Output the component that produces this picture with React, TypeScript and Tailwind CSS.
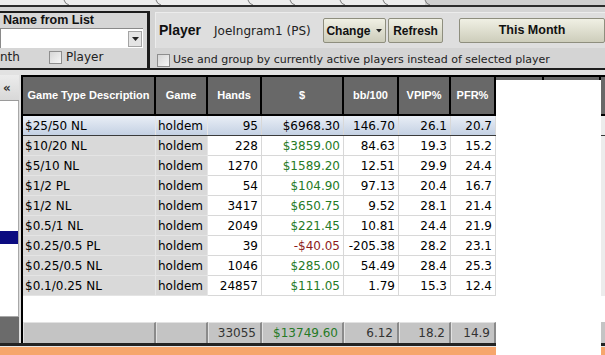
import React from 'react';

const cols = [
  { w: 'w-[133px]', gray: true, left: true },
  { w: 'w-[52px]', gray: true, left: true },
  { w: 'w-[54px]', gray: false, left: false },
  { w: 'w-[82px]', gray: false, left: false },
  { w: 'w-[55px]', gray: false, left: false },
  { w: 'w-[52px]', gray: false, left: false },
  { w: 'w-[45px]', gray: false, left: false },
];

const headers = ['Game Type Description', 'Game', 'Hands', '$', 'bb/100', 'VPIP%', 'PFR%'];

const rows = [
  ['$25/50 NL', 'holdem', '95', '$6968.30', '146.70', '26.1', '20.7'],
  ['$10/20 NL', 'holdem', '228', '$3859.00', '84.63', '19.3', '15.2'],
  ['$5/10 NL', 'holdem', '1270', '$1589.20', '12.51', '29.9', '24.4'],
  ['$1/2 PL', 'holdem', '54', '$104.90', '97.13', '20.4', '16.7'],
  ['$1/2 NL', 'holdem', '3417', '$650.75', '9.52', '28.1', '21.4'],
  ['$0.5/1 NL', 'holdem', '2049', '$221.45', '10.81', '24.4', '21.9'],
  ['$0.25/0.5 PL', 'holdem', '39', '-$40.05', '-205.38', '28.2', '23.1'],
  ['$0.25/0.5 NL', 'holdem', '1046', '$285.00', '54.49', '28.4', '25.3'],
  ['$0.1/0.25 NL', 'holdem', '24857', '$111.05', '1.79', '15.3', '12.4'],
];

const footer = ['', '', '33055', '$13749.60', '6.12', '18.2', '14.9'];

// only the $ column is coloured
function moneyColor(v: string, ci: number) {
  if (ci !== 3) return '';
  if (v.startsWith('-$')) return 'text-[#8c1c1c]';
  if (v.startsWith('$')) return 'text-[#267a26]';
  return '';
}

function Checkbox() {
  return <div className="w-[13px] h-[13px] shrink-0 border border-[#8e8e8e] bg-gradient-to-br from-[#d6d6d6] to-[#f6f6f6]" />;
}

function TabStrip() {
  return (
    <div className="h-[5px] flex">
      <div className="w-[425px] bg-[#ededed]" />
      <div className="flex-1 bg-[#cfcfcf]" />
      <svg className="absolute left-0 top-0" width="605" height="5">
        {[64, 156, 248, 290, 340, 383, 425].map((x) => (
          <path key={x} d={`M${x} 0 Q${x + 1} 4 ${x + 5} 5`} stroke="#7a7a7a" strokeWidth="1" fill="none" />
        ))}
      </svg>
    </div>
  );
}

export default function App() {
  return (
    <div className="relative w-[605px] h-[355px] overflow-hidden bg-[#d4d4d4] font-['DejaVu_Sans',sans-serif] text-[12px] text-black">
      <TabStrip />
      <div className="h-[2px] bg-[#2c2c2c]" />

      {/* toolbar */}
      <div className="flex h-[61px]">
        <div className="mt-[4px] w-[150px] h-[57px] border-t-2 border-r-[3px] border-[#1c1c1c] bg-[#d6d6d6]">
          <div className="h-[15px] pl-[3px] leading-[15px] font-bold font-['Liberation_Sans',sans-serif] text-[12.5px] text-[#111]">
            Name from List
          </div>
          <div className="flex items-center justify-end w-[143px] h-[20px] bg-white border-t border-l border-[#8a8a8a] pr-[1px]">
            <div className="w-[14px] h-[16px] flex items-center justify-center bg-[#e4e4e4] border border-[#a4a4a4]">
              <svg width="7" height="4" viewBox="0 0 7 4">
                <path d="M0 0 L7 0 L3.5 4 Z" fill="#222" />
              </svg>
            </div>
          </div>
          <div className="mt-[2px] flex items-center h-[14px] text-[#222]">
            <span className="w-[49px]">nth</span>
            <Checkbox />
            <span className="ml-[4px]">Player</span>
          </div>
        </div>

        <div className="flex-1 ml-[5px] min-w-0">
          <div className="mt-[5px] h-[36px] flex items-center bg-[#dedede] border-t border-l border-[#ececec] pl-[3px] whitespace-nowrap">
            <span className="font-bold font-['Liberation_Sans',sans-serif] text-[14px] text-[#111]">Player</span>
            <span className="ml-[13px] text-[#222]">JoeIngram1 (PS)</span>
            <button className="ml-[12px] w-[67px] h-[25px] flex items-center justify-center gap-[6px] border border-[#8e8e7e] rounded-[2px] bg-gradient-to-b from-[#f0f0e4] to-[#cdcdbb] font-bold font-['Liberation_Sans',sans-serif] text-[12px] text-[#111]">
              Change
              <svg width="6" height="4" viewBox="0 0 6 4">
                <path d="M0 0 L6 0 L3 3.5 Z" fill="#222" />
              </svg>
            </button>
            <button className="ml-[2px] w-[58px] h-[25px] border border-[#8e8e7e] rounded-[2px] bg-gradient-to-b from-[#f0f0e4] to-[#cdcdbb] font-bold font-['Liberation_Sans',sans-serif] text-[12px] text-[#111]">
              Refresh
            </button>
            <button className="ml-[16px] w-[146px] shrink-0 h-[25px] border border-[#8e8e7e] rounded-[2px] bg-gradient-to-b from-[#f0f0e4] to-[#cdcdbb] font-bold font-['Liberation_Sans',sans-serif] text-[12.5px] text-[#111]">
              This Month
            </button>
          </div>
          <div className="mt-[4px] flex items-center pl-[2px] whitespace-nowrap text-[11px] text-[#222]">
            <Checkbox />
            <span className="ml-[3px]">Use and group by currently active players instead of selected player</span>
          </div>
        </div>
      </div>

      <div className="h-[2px] bg-[#1e1e1e]" />
      <div className="h-[5px] bg-[#e2e2e2]" />

      {/* main */}
      <div className="flex h-[268px]">
        <div className="w-[19px] flex flex-col">
          <div className="h-[26px] flex items-center pl-[3px] bg-gradient-to-b from-[#ececec] to-[#d8d8d8] border-b border-[#9a9a9a] font-bold text-[#333]">
            «
          </div>
          <div className="flex-1 bg-white border-r border-b border-[#a8a8a8] pt-[130px]">
            <div className="h-[13px] bg-[#0b0b80]" />
          </div>
          <div className="h-[26px] bg-[#6b6b6b]" />
        </div>
        <div className="w-[2px] bg-[#dedede]" />
        <div className="w-[2px] bg-black" />

        <div className="flex-1 flex flex-col min-w-0">
          {/* header */}
          <div className="flex h-[41px] border-t-2 border-b-2 border-black bg-[#686868] font-bold font-['Liberation_Sans',sans-serif] text-[11px] text-white">
            {headers.map((h, i) => (
              <div key={h} className={`${cols[i].w} shrink-0 flex items-center justify-center border-r-2 border-black`}>
                {h}
              </div>
            ))}
            <div className="w-[48px] shrink-0 border-r-2 border-black" />
            <div className="w-[57px] shrink-0 border-r-2 border-black" />
            <div className="flex-1" />
          </div>

          {/* rows */}
          {rows.map((r, ri) => {
            const sel = ri === 0;
            return (
              <div
                key={ri}
                className={`flex h-[20px] ${sel ? 'bg-gradient-to-b from-[#e9eef6] to-[#c4d1e3] border-b border-[#3a3a3a]' : ''}`}
              >
                {r.map((v, ci) => {
                  const c = cols[ci];
                  const bg = sel ? '' : c.gray ? 'bg-[#d9d9d9] border-b border-[#e4e4e4]' : 'bg-white border-b border-[#d8d8d8]';
                  const color = sel ? '' : moneyColor(v, ci);
                  return (
                    <div
                      key={ci}
                      className={`${c.w} shrink-0 flex items-center whitespace-nowrap overflow-hidden border-r ${c.gray ? 'border-r-[#e6e6e6]' : 'border-r-[#d8d8d8]'} ${bg} ${color} ${c.left ? 'pl-[2px]' : 'justify-end pr-[3px]'}`}
                    >
                      {v}
                    </div>
                  );
                })}
                <div className="flex-1 bg-[#ececec]" />
              </div>
            );
          })}

          <div className="h-[26px] bg-white" />

          {/* footer */}
          <div className="flex h-[21px] bg-[#c4c4c4] text-[#333]">
            {footer.map((v, ci) => (
              <div
                key={ci}
                className={`${cols[ci].w} shrink-0 flex items-center justify-end pr-[4px] border-t border-l border-[#e2e2e2] border-r-2 border-r-[#8a8a8a] ${moneyColor(v, ci)}`}
              >
                {v}
              </div>
            ))}
            <div className="flex-1" />
          </div>
        </div>
      </div>

      <div className="h-[3px] bg-[#232323]" />
      <div className="h-[1px] bg-[#e6e6e6]" />
      <div className="h-[8px] bg-[#f6a66c]" />

      {/* floating blank panel */}
      <div className="absolute left-[496px] top-[80px] w-[105px] h-[275px] bg-white" />
    </div>
  );
}
